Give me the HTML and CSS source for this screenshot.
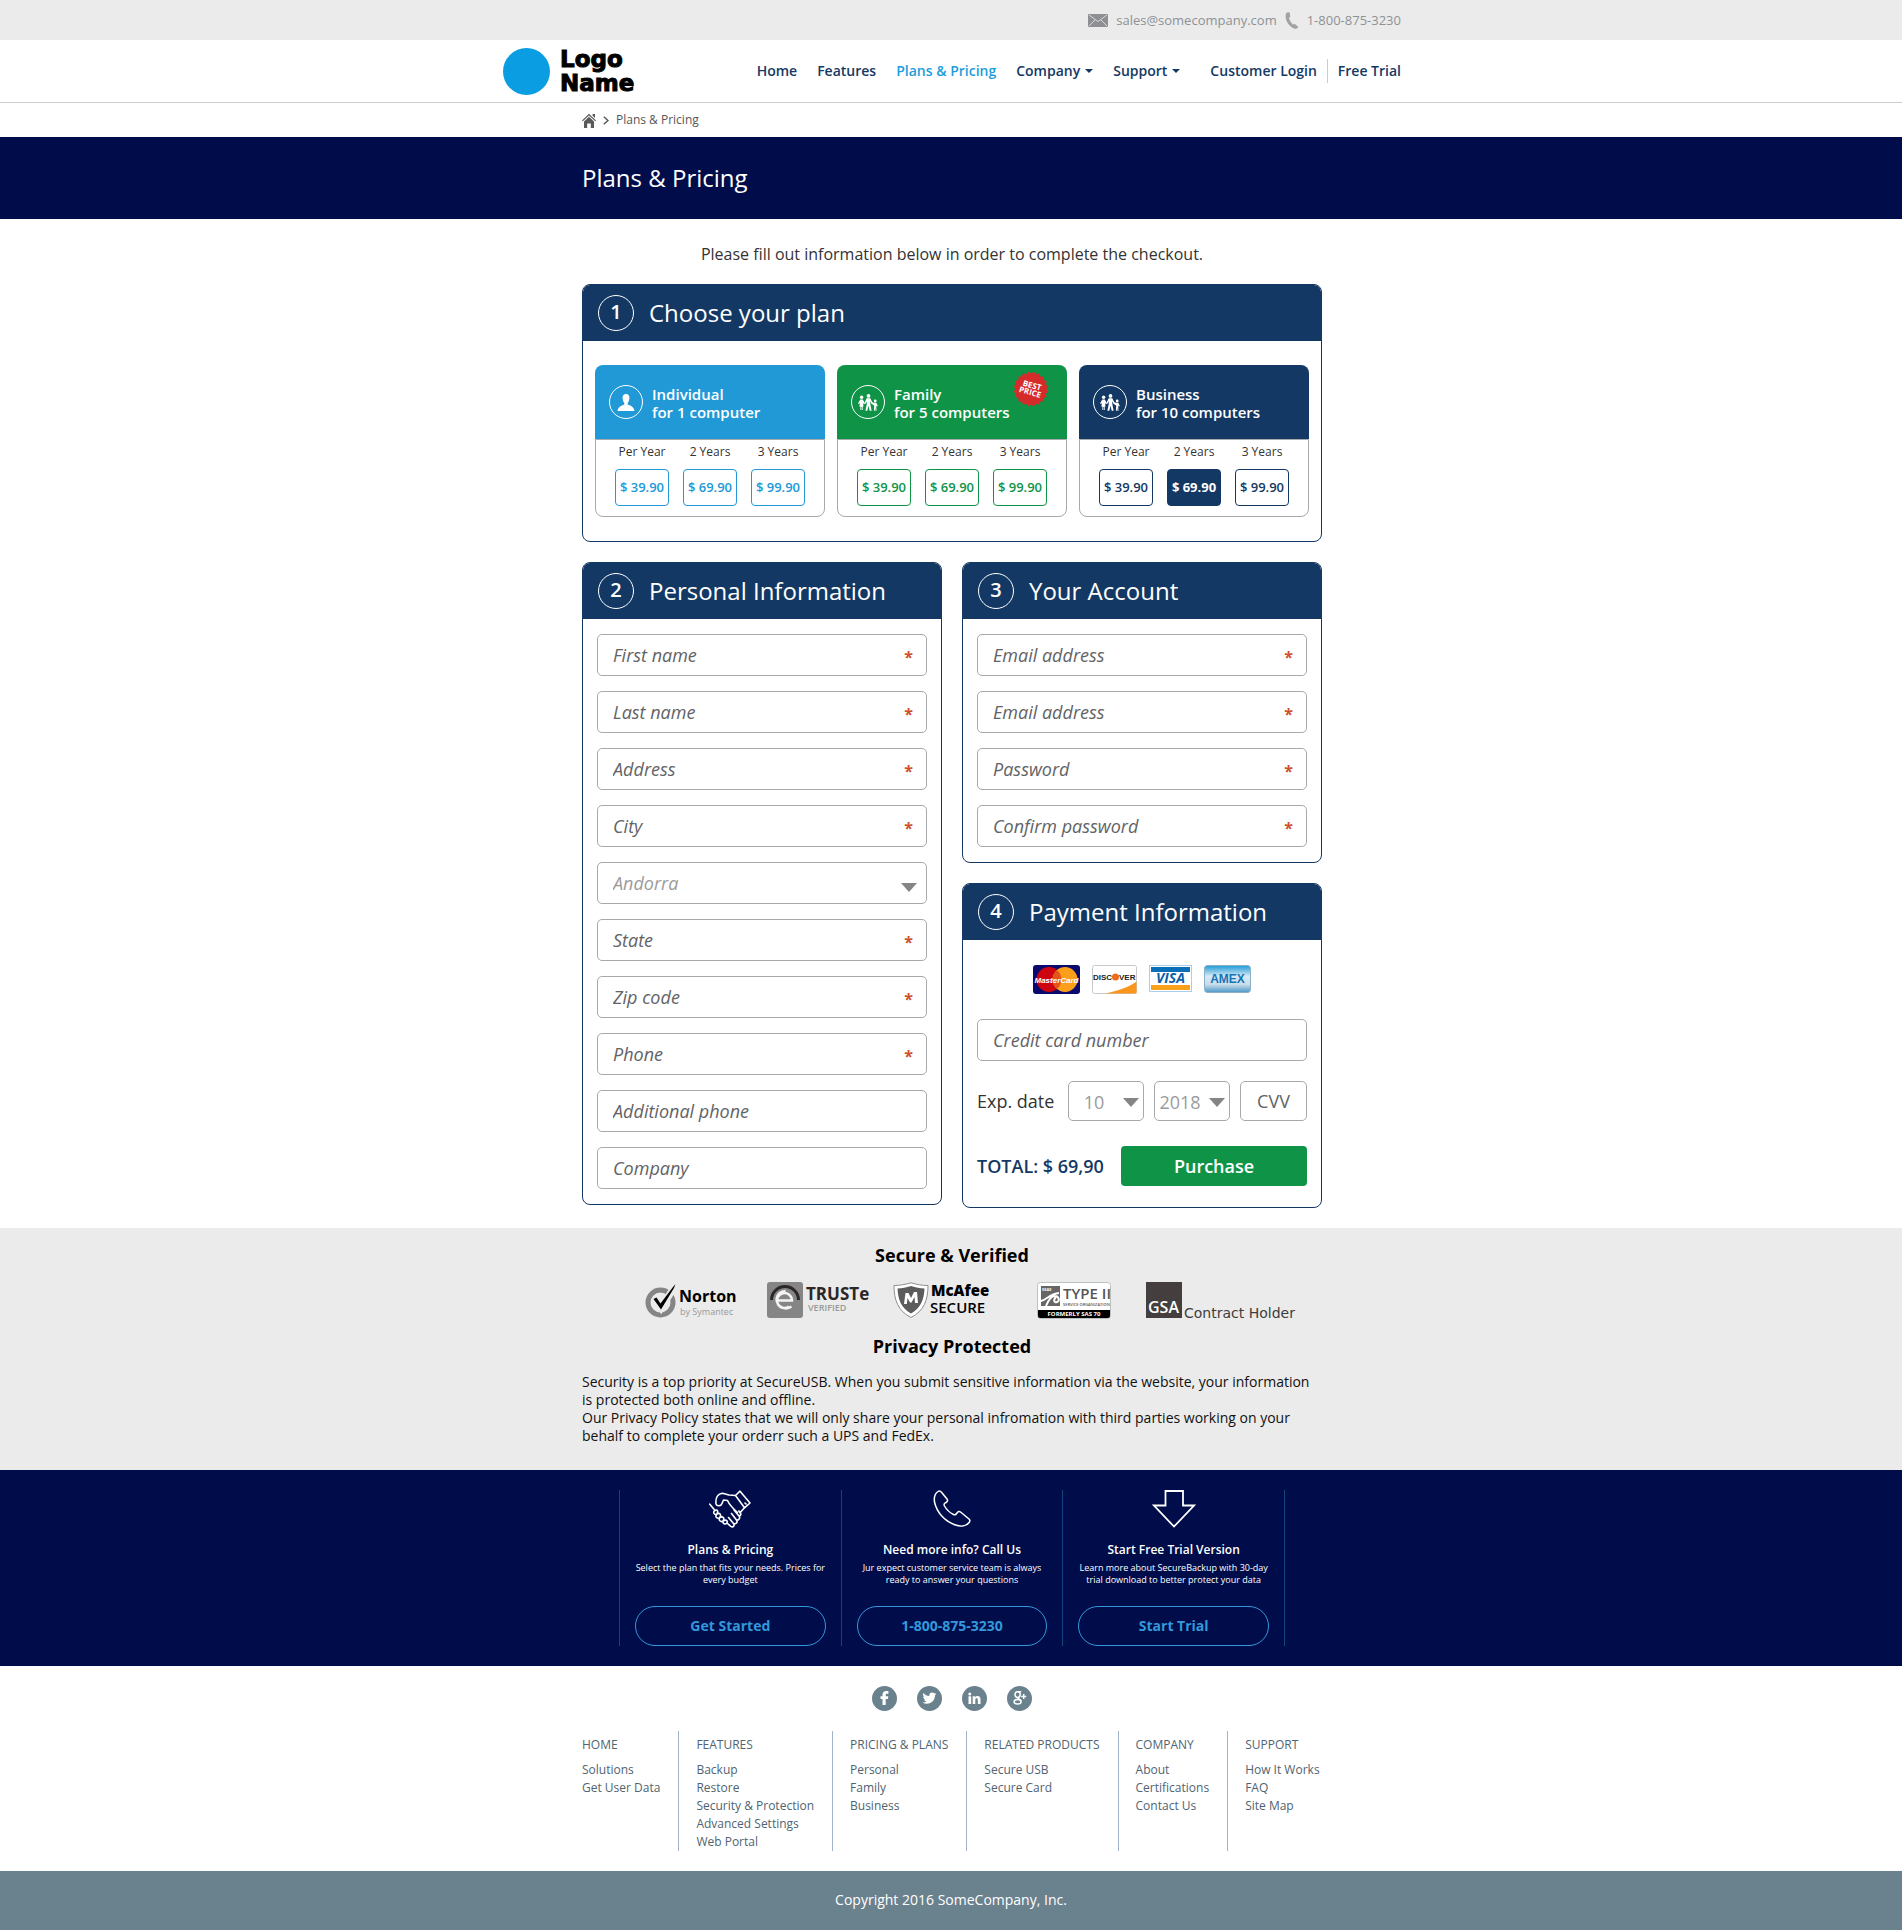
FILE: index.html
```html
<!DOCTYPE html>
<html lang="en">
<head>
<meta charset="utf-8">
<meta name="viewport" content="width=device-width, initial-scale=1">
<title>Plans &amp; Pricing</title>
<link rel="stylesheet" href="styles.css">
</head>
<body>
<svg class="sprite" aria-hidden="true" width="0" height="0">
  <symbol id="group" viewBox="0 0 20 17">
    <circle cx="3.6" cy="3.3" r="1.7"/>
    <path d="M2.3 5.4h2.6l2 4.1-.9.7-1-1.3.5 3.7h-.8V16H3.9v-3h-.6v3H2.4v-3.400H1.200l1-3.800-1 1.300L0 9.500z"/>
    <circle cx="10.500" cy="1.900" r="1.900"/>
    <path d="M8.700 4.200h3.600l2.500 5-1 .7-1.700-2.600.3 3.200 1.200 6.200h-1.900l-1.200-5-1.200 5H7.400l1.300-6.200.2-3.200-1.600 2.600-1-.7z"/>
    <circle cx="17.200" cy="7" r="1.400"/>
    <path d="M16.100 8.800h2.200l1.500 3.200-.8.500-.8-1.100.3 5.300h-1l-.3-3-.3 3h-1l.3-5.300-1.400-.6-1.600-1.900.7-.7z"/>
  </symbol>
</svg>

<div class="topbar">
  <div class="wrap wide topbar-row">
    <svg width="20" height="13" viewBox="0 0 20 13" aria-hidden="true"><rect width="20" height="13" rx="1" fill="#8d8f92"/><path d="M1 1l9 6.500L19 1M1 12l6-6M19 12l-6-6" fill="none" stroke="#d8d8d8"/></svg>
    <a class="mail" href="mailto:sales@somecompany.com">sales@somecompany.com</a>
    <svg width="14" height="17" viewBox="0 0 14 17" aria-hidden="true"><path d="M1 1.500C2 .2 4 0 4.600.8L5.300 4.500 4 6c.5 2.500 2 4.800 4 6.500l2-.6L13.300 15c-.6 1.500-2.600 2.200-4.300 1.600C4 14.500-.8 8 1 1.500z" fill="#a0a2a4"/></svg>
    <a class="phone" href="tel:18008753230">1-800-875-3230</a>
  </div>
</div>

<header class="header">
  <div class="wrap wide header-row">
    <a class="logo" href="#"><span class="logo-dot"></span><span>Logo<br>Name</span></a>
    <nav class="nav">
      <a href="#">Home</a>
      <a href="#">Features</a>
      <a class="active" href="#">Plans &amp; Pricing</a>
      <a class="more" href="#">Company</a>
      <a class="more" href="#">Support</a>
      <span class="account"><a href="#">Customer Login</a><a href="#">Free Trial</a></span>
    </nav>
  </div>
</header>

<div class="wrap crumbs">
  <a href="#" aria-label="Home page"><svg width="14" height="15" viewBox="0 0 14 15" aria-hidden="true"><path d="M0 7.400L7 .8l7 6.600-.8.800L7 2.400.8 8.200z M10.600 1H13v4l-2.400-2.200z M7 3.800l5 4.700V15H8.800v-4.500H5.200V15H2V8.500z" fill="#5a5a5a"/></svg></a>
  <svg width="6" height="9" viewBox="0 0 6 9" aria-hidden="true"><path d="M.8.800L5 4.500.8 8.200" fill="none" stroke="#555" stroke-width="1.500"/></svg>
  <span>Plans &amp; Pricing</span>
</div>

<div class="banner"><div class="wrap"><h1>Plans &amp; Pricing</h1></div></div>

<main class="wrap">
  <p class="intro">Please fill out information below in order to complete the checkout.</p>

  <section class="panel">
    <h2 class="panel-head"><span class="step">1</span>Choose your plan</h2>
    <div class="plans">
      <article class="plan individual">
        <div class="plan-head">
          <span class="plan-icon"><svg width="18" height="17" viewBox="0 0 18 17" aria-hidden="true"><path d="M9 0c2.500 0 3.700 1.800 3.400 4.400C12.200 6.500 11.400 8 10.700 8.900v1.500C13 11.500 17 12.300 17.500 17H.5C1 12.300 5 11.500 7.300 10.400V8.900C6.600 8 5.800 6.500 5.600 4.400 5.300 1.800 6.500 0 9 0z"/></svg></span>
          <h3>Individual<br>for 1 computer</h3>
        </div>
        <div class="prices">
          <div>Per Year<button type="button">$ 39.90</button></div>
          <div>2 Years<button type="button">$ 69.90</button></div>
          <div>3 Years<button type="button">$ 99.90</button></div>
        </div>
      </article>
      <article class="plan family">
        <div class="plan-head">
          <span class="plan-icon"><svg width="20" height="17" aria-hidden="true"><use href="#group"/></svg></span>
          <h3>Family<br>for 5 computers</h3>
          <svg class="badge" width="36" height="36" viewBox="-18 -18 36 36">
            <g fill="#d52b2b"><rect x="-12.500" y="-12.500" width="25" height="25"/><rect x="-12.500" y="-12.500" width="25" height="25" transform="rotate(18)"/><rect x="-12.500" y="-12.500" width="25" height="25" transform="rotate(36)"/><rect x="-12.500" y="-12.500" width="25" height="25" transform="rotate(54)"/><rect x="-12.500" y="-12.500" width="25" height="25" transform="rotate(72)"/></g>
            <g class="badge-text" transform="rotate(16)"><text x="0" y="-1">BEST</text><text x="0" y="6">PRICE</text></g>
          </svg>
        </div>
        <div class="prices">
          <div>Per Year<button type="button">$ 39.90</button></div>
          <div>2 Years<button type="button">$ 69.90</button></div>
          <div>3 Years<button type="button">$ 99.90</button></div>
        </div>
      </article>
      <article class="plan business">
        <div class="plan-head">
          <span class="plan-icon"><svg width="20" height="17" aria-hidden="true"><use href="#group"/></svg></span>
          <h3>Business<br>for 10 computers</h3>
        </div>
        <div class="prices">
          <div>Per Year<button type="button">$ 39.90</button></div>
          <div>2 Years<button type="button" class="chosen" aria-pressed="true">$ 69.90</button></div>
          <div>3 Years<button type="button">$ 99.90</button></div>
        </div>
      </article>
    </div>
  </section>

  <form class="columns">
    <section class="panel">
      <h2 class="panel-head"><span class="step">2</span>Personal Information</h2>
      <div class="fields">
        <div class="field required"><input type="text" placeholder="First name" aria-label="First name"></div>
        <div class="field required"><input type="text" placeholder="Last name" aria-label="Last name"></div>
        <div class="field required"><input type="text" placeholder="Address" aria-label="Address"></div>
        <div class="field required"><input type="text" placeholder="City" aria-label="City"></div>
        <div class="field pick country"><select aria-label="Country"><option>Andorra</option></select></div>
        <div class="field required"><input type="text" placeholder="State" aria-label="State"></div>
        <div class="field required"><input type="text" placeholder="Zip code" aria-label="Zip code"></div>
        <div class="field required"><input type="tel" placeholder="Phone" aria-label="Phone"></div>
        <div class="field"><input type="tel" placeholder="Additional phone" aria-label="Additional phone"></div>
        <div class="field"><input type="text" placeholder="Company" aria-label="Company"></div>
      </div>
    </section>

    <div class="stack">
      <section class="panel">
        <h2 class="panel-head"><span class="step">3</span>Your Account</h2>
        <div class="fields">
          <div class="field required"><input type="email" placeholder="Email address" aria-label="Email address"></div>
          <div class="field required"><input type="email" placeholder="Email address" aria-label="Repeat email address"></div>
          <div class="field required"><input type="password" placeholder="Password" aria-label="Password"></div>
          <div class="field required"><input type="password" placeholder="Confirm password" aria-label="Confirm password"></div>
        </div>
      </section>

      <section class="panel">
        <h2 class="panel-head"><span class="step">4</span>Payment Information</h2>
        <div class="payment">
          <div class="cards">
            <svg width="47" height="29" viewBox="0 0 47 29"><rect width="47" height="29" rx="3" fill="#0a0a6e"/><circle cx="16" cy="14.500" r="12.500" fill="#cc0510"/><circle cx="32" cy="14.500" r="12.500" fill="#fb9f1b"/><path d="M24 5a12.500 12.500 0 0 1 0 19a12.500 12.500 0 0 1 0-19z" fill="#e2531a"/><text class="mc" x="23.500" y="18">MasterCard</text></svg>
            <svg width="45" height="29" viewBox="0 0 45 29"><rect x=".5" y=".5" width="44" height="28" rx="2" fill="#fff" stroke="#c9c9c9"/><path d="M12 28.500C25 26.500 37 22 44.500 16.500v12z" fill="#f9961e"/><circle cx="23.500" cy="12" r="3.500" fill="#ef6c1a"/><g class="disc"><text x="1" y="15">DISC</text><text x="27" y="15">VER</text></g></svg>
            <svg width="43" height="27" viewBox="0 0 43 27"><rect x=".5" y=".5" width="42" height="26" fill="#fff" stroke="#a9cdea"/><rect x="2" y="2" width="39" height="5" fill="#0a6fb8"/><rect x="2" y="20" width="39" height="5" fill="#f9a11b"/><text class="visa" x="21.500" y="18">VISA</text></svg>
            <svg width="47" height="28" viewBox="0 0 47 28"><defs><linearGradient id="amex" x1="0" y1="0" x2="0" y2="1"><stop offset="0" stop-color="#1f9ad6"/><stop offset=".4" stop-color="#d7e9f5"/><stop offset=".7" stop-color="#c9dcea"/><stop offset="1" stop-color="#4b97c9"/></linearGradient></defs><rect x=".5" y=".5" width="46" height="27" rx="3" fill="url(#amex)" stroke="#8bb0c8"/><text class="amex" x="23.500" y="18">AMEX</text></svg>
          </div>
          <div class="field"><input type="text" placeholder="Credit card number" aria-label="Credit card number"></div>
          <div class="expiry">
            <label for="exp-month">Exp. date</label>
            <div class="pick small"><select id="exp-month"><option>10</option></select></div>
            <div class="pick small"><select aria-label="Expiry year"><option>2018</option></select></div>
            <input class="cvv" type="text" placeholder="CVV" aria-label="CVV">
          </div>
          <div class="total">
            <strong>TOTAL: $ 69,90</strong>
            <button class="buy" type="submit">Purchase</button>
          </div>
        </div>
      </section>
    </div>
  </form>
</main>

<section class="secure">
  <div class="wrap">
    <h2>Secure &amp; Verified</h2>
    <div class="seals">
      <svg width="122" height="37" viewBox="0 0 122 37"><circle cx="15.500" cy="20.500" r="12.500" fill="none" stroke="#858585" stroke-width="5"/><path d="M10 18l6 8L30 4" fill="none" stroke="#ebebeb" stroke-width="7"/><path d="M8.500 17l3-1.500 4 6L28 5l2.500-3-1.500 4-13 21.500z"/><text class="norton" x="34" y="20">Norton</text><text class="by" x="35" y="33">by Symantec</text></svg>
      <svg width="126" height="37" viewBox="0 0 126 37"><rect width="36" height="36" rx="3" fill="#858585"/><path d="M4.500 18a13.500 13.500 0 0 1 27 0" fill="none" stroke="#2d2626" stroke-width="3"/><path d="M11 18.500h14a7.500 7.500 0 1 0-3 6M24.500 24.500a9.500 9.500 0 0 1-15-7.500 9 9 0 0 1 9-8" fill="none" stroke="#f3f3f3" stroke-width="2.500"/><text class="truste" x="39" y="18">TRUSTe</text><text class="verified" x="41" y="29">VERIFIED</text></svg>
      <svg width="144" height="37" viewBox="0 0 144 37"><path d="M1 3.500C7 3.500 12 2.500 18 .8c6 1.700 11 2.700 17 2.700C35 18 31 29 18 35.500 5 29 1 18 1 3.500z" fill="#fff" stroke="#8e8e8e"/><path d="M4.500 6.500C9.500 6.500 13 5.500 18 4c5 1.500 8.500 2.500 13.500 2.500C31 17.500 28 26 18 31.500 8 26 5 17.500 4.500 6.500z" fill="#5c5c5c"/><path d="M11 22l1.500-11h3L18 16l3-6h3L25 21h-3l-.5-6-3 5.500h-1.500L14.500 16l-.7 6z" fill="#fff"/><g class="mcafee"><text x="38" y="14">McAfee</text><text class="thin" x="37" y="31">SECURE</text></g></svg>
      <svg width="109" height="37" viewBox="0 0 109 37"><rect x=".5" y=".5" width="73" height="36" rx="3" fill="#fff" stroke="#b9c2c0"/><path d="M1 28h72v6a2 2 0 0 1-2 2H3a2 2 0 0 1-2-2z"/><rect x="4" y="4" width="19" height="20" fill="#666"/><path d="M4 19c5-1 9-7 18-8M9 24c2-5 5-10 9-10s5 5 2 6-4-2-1-5" fill="none" stroke="#fff" stroke-width="2"/><text class="ssae" x="5" y="9">SSAE</text><text class="type" x="26" y="17">TYPE II</text><text class="org" x="26" y="24">SERVICE ORGANIZATION</text><text class="sas" x="37" y="34">FORMERLY SAS 70</text></svg>
      <svg width="154" height="40" viewBox="0 0 154 40"><rect width="36" height="36" fill="#443f3e"/><text class="gsa" x="2" y="31">GSA</text><text class="holder" x="38" y="36">Contract Holder</text></svg>
    </div>
    <h2>Privacy Protected</h2>
    <p>Security is a top priority at SecureUSB. When you submit sensitive information via the website, your information is protected both online and offline.<br>Our Privacy Policy states that we will only share your personal infromation with third parties working on your behalf to complete your orderr such a UPS and FedEx.</p>
  </div>
</section>

<section class="promo">
  <div class="promo-row">
    <div class="promo-item">
      <svg width="42" height="38" viewBox="0 0 42 38" aria-hidden="true"><path d="M31 1.200L26.500 5.500 35.500 17.800 41 13zM26.500 5.500L20 5 13.500 3.200C8 3.800 6.500 9 7 14c1 2.500 5 2.500 6-.5l1.500-3.500 4 .5c2 4.500 5.500 8 10 12M35.500 17.800l-4.500 5M.8 14.200L6 20.500M36 13l1 1M6 20.500c-2.500 1.500-1 4.500 1.500 4-1.500 2.500.5 4.500 3 3.500-1 2.500 1.500 4.500 3.500 3-.5 2.500 2 4 4 2l3.500 3.200c2.500 1.800 4.500-.4 3-2.700 2.500 1 4.500-1 3-3.500 2.500.5 4-2 2.500-4 2.500-.500 2.500-3-.200-5M6 20.500c2-1.500 4 .5 1.500 4M7.500 24.500c3-2.500 5.500 0 3 3.500M10.500 28c3-2.500 5.500 0 3.500 3M14 31c3-2 5 0 4 2M24.500 33.500l-5-6M27.500 30l-5-6.500M30 26l-5-6" fill="none" stroke="#fff" stroke-width="1.600" stroke-linejoin="round" stroke-linecap="round"/></svg>
      <h3>Plans &amp; Pricing</h3>
      <p>Select the plan that fits your needs. Prices for every budget</p>
      <a class="pill" href="#">Get Started</a>
    </div>
    <div class="promo-item">
      <svg width="38" height="38" viewBox="0 0 38 38" aria-hidden="true"><path d="M5 1.500C6 .7 7.500 1 8.500 2.200L14 9c1 1.500.6 2.500-1 3.500-2 1-2.300 2-1.500 3.500 2 3.500 5 6.500 9 8.500 1.500.8 2.500.2 3.500-1.500s2.200-2 3.500-1l8.500 7c1 1 1.200 2 .3 3.200C33.500 36 28 37 22.500 35 12 31.500 4 23 1.500 12 .8 7 2 3.500 5 1.500z" fill="none" stroke="#fff" stroke-width="1.500"/></svg>
      <h3>Need more info? Call Us</h3>
      <p>Jur expect customer service team is always ready to answer your questions</p>
      <a class="pill" href="#">1-800-875-3230</a>
    </div>
    <div class="promo-item">
      <svg width="44" height="38" viewBox="0 0 44 38" aria-hidden="true"><path d="M13.500 1H31v14.500h11L22 36.500 2 15.500h11.500z" fill="none" stroke="#fff" stroke-width="1.800"/></svg>
      <h3>Start Free Trial Version</h3>
      <p>Learn more about SecureBackup with 30-day trial download to better protect your data</p>
      <a class="pill" href="#">Start Trial</a>
    </div>
  </div>
</section>

<footer>
  <div class="wrap">
    <div class="social">
      <a href="#" aria-label="Facebook"><svg width="25" height="25" viewBox="0 0 25 25"><circle cx="12.500" cy="12.500" r="12.500"/><path fill="#fff" d="M10.500 19v-6H8.500v-2.700h2V8.500C10.500 6.300 12 5 14 5h2.400v2.700h-1.600c-.8 0-1.100.4-1.100 1.100v1.500h2.600L16 13h-2.300v6z"/></svg></a>
      <a href="#" aria-label="Twitter"><svg width="25" height="25" viewBox="0 0 25 25"><circle cx="12.500" cy="12.500" r="12.500"/><path fill="#fff" transform="translate(5.500 5.200) scale(.58)" d="M23.900 4.600c-.9.400-1.800.7-2.800.8 1-.6 1.800-1.600 2.200-2.700-1 .6-2 1-3.100 1.200a4.900 4.900 0 0 0-8.400 4.500C7.700 8.200 4.100 6.300 1.700 3.200a4.800 4.800 0 0 0 1.500 6.500c-.8 0-1.600-.2-2.200-.6v.1c0 2.300 1.700 4.300 3.900 4.800-.7.200-1.500.2-2.200.1.600 1.900 2.400 3.300 4.600 3.400A9.900 9.900 0 0 1 0 19.500 14 14 0 0 0 7.500 21.700c9.100 0 14.400-7.700 14-14.600 1-.7 1.800-1.600 2.400-2.500z"/></svg></a>
      <a href="#" aria-label="LinkedIn"><svg width="25" height="25" viewBox="0 0 25 25"><circle cx="12.500" cy="12.500" r="12.500"/><path fill="#fff" d="M6.500 10.200h2.700V18H6.500zM7.800 6.500a1.500 1.500 0 1 1 0 3 1.500 1.500 0 0 1 0-3zM10.700 10.200h2.500v1.100c.6-.9 1.400-1.400 2.500-1.400 2.100 0 2.800 1.400 2.800 3.500V18h-2.700v-4.200c0-1-.4-1.600-1.200-1.600-.8 0-1.300.6-1.300 1.600V18h-2.600z"/></svg></a>
      <a href="#" aria-label="Google Plus"><svg width="25" height="25" viewBox="0 0 25 25"><circle cx="12.500" cy="12.500" r="12.500"/><g fill="none" stroke="#fff" stroke-width="1.500"><ellipse cx="10.600" cy="8.600" rx="2.600" ry="2.900"/><ellipse cx="10.600" cy="15.800" rx="3.500" ry="2.300"/><path d="M11 5.700h3.200M10.500 11.500c-.5 1 3.300 1.500 3.500 3.500M14.200 10.500h5M16.700 8v5"/></g></svg></a>
    </div>
    <nav class="sitemap">
      <div><h4>HOME</h4><a href="#">Solutions</a><a href="#">Get User Data</a></div>
      <div><h4>FEATURES</h4><a href="#">Backup</a><a href="#">Restore</a><a href="#">Security &amp; Protection</a><a href="#">Advanced Settings</a><a href="#">Web Portal</a></div>
      <div><h4>PRICING &amp; PLANS</h4><a href="#">Personal</a><a href="#">Family</a><a href="#">Business</a></div>
      <div><h4>RELATED PRODUCTS</h4><a href="#">Secure USB</a><a href="#">Secure Card</a></div>
      <div><h4>COMPANY</h4><a href="#">About</a><a href="#">Certifications</a><a href="#">Contact Us</a></div>
      <div><h4>SUPPORT</h4><a href="#">How It Works</a><a href="#">FAQ</a><a href="#">Site Map</a></div>
    </nav>
  </div>
  <p class="copyright">Copyright 2016 SomeCompany, Inc.</p>
</footer>
</body>
</html>
```
FILE: styles.css
```css
:root {
  --navy: #143864;
  --deep: #000d4a;
  --blue: #2199d7;
  --green: #0f9447;
  --grey: #ebebeb;
  --line: #a7a9ac;
  --slate: #6a818e;
}

*, *::before, *::after { box-sizing: border-box; }

body {
  margin: 0;
  font: 400 14px/18px "Open Sans", "Noto Sans", sans-serif;
  color: #333;
  background: #fff;
}

h1, h2, h3, h4, p { margin: 0; font-weight: 400; }
a { color: inherit; text-decoration: none; }
svg { display: block; flex: none; }
button, input, select { font: inherit; margin: 0; }
.sprite { position: absolute; }

.wrap { max-width: 742px; margin: 0 auto; padding-left: 2px; }
.wide { max-width: 900px; }

/* Top contact strip */
.topbar { background: var(--grey); }
.topbar-row {
  display: flex;
  align-items: center;
  justify-content: flex-end;
  height: 40px;
  gap: 8px;
  font-size: 13px;
  color: #8d9296;
}

/* Header */
.header { border-bottom: 1px solid #ccc; }
.header-row {
  display: flex;
  align-items: center;
  justify-content: space-between;
  height: 62px;
}
.logo {
  display: flex;
  align-items: center;
  gap: 10px;
  font: 700 23px/24px "DejaVu Sans", sans-serif;
  color: #000;
  -webkit-text-stroke: 1px #000;
}
.logo-dot { width: 47px; height: 47px; border-radius: 50%; background: #0b9de2; }
.nav { display: flex; align-items: center; gap: 20px; font-weight: 600; color: var(--navy); }
.nav .active { color: #1b9ddb; }
.more { display: flex; align-items: center; gap: 5px; }
.more::after { content: ""; border: 4px solid transparent; border-top-color: var(--navy); border-bottom: 0; }
.account { display: flex; align-items: center; margin-left: 10px; line-height: 24px; }
.account a + a { margin-left: 10px; padding-left: 10px; border-left: 1px solid #ccc; }

.crumbs { display: flex; align-items: center; height: 34px; gap: 7px; font-size: 12px; color: #555; }

.banner { padding: 25px 0; background: var(--deep); color: #fff; }
.banner h1 { font-size: 24px; line-height: 32px; }

.intro { padding: 25px 0 20px; font-size: 16px; line-height: 20px; text-align: center; }

/* Panels */
.panel { border: 1px solid var(--navy); border-radius: 8px; overflow: hidden; }
.panel-head {
  display: flex;
  align-items: center;
  gap: 15px;
  height: 56px;
  padding: 0 15px;
  background: var(--navy);
  color: #fff;
  font-size: 24px;
}
.step {
  flex: none;
  width: 36px;
  height: 36px;
  border: 1px solid #fff;
  border-radius: 50%;
  font-size: 20px;
  line-height: 32px;
  font-weight: 600;
  text-align: center;
}

/* Plans */
.plans { display: grid; grid-template-columns: repeat(3, 1fr); gap: 12px; padding: 24px 12px; }
.plan { --tone: var(--navy); border-radius: 8px; color: var(--tone); }
.individual { --tone: var(--blue); }
.family { --tone: var(--green); }
.plan-head {
  position: relative;
  display: flex;
  align-items: center;
  gap: 9px;
  height: 74px;
  padding: 0 14px;
  border-radius: 8px 8px 0 0;
  background: var(--tone);
  color: #fff;
}
.plan-head h3 { padding-top: 2px; font-size: 15px; line-height: 18px; font-weight: 600; }
.plan-icon {
  display: grid;
  place-items: center;
  width: 34px;
  height: 34px;
  border: 1px solid #fff;
  border-radius: 50%;
  fill: #fff;
}
.badge { position: absolute; top: 6px; right: 18px; }
.badge-text { font-size: 8px; font-weight: 700; fill: #fff; text-anchor: middle; }
.prices {
  display: flex;
  justify-content: center;
  gap: 14px;
  padding: 3px 0 10px;
  border: 1px solid var(--line);
  border-radius: 0 0 8px 8px;
  font-size: 12px;
  text-align: center;
}
.prices > div { width: 54px; color: #333; white-space: nowrap; }
.prices button {
  display: block;
  width: 54px;
  height: 37px;
  margin-top: 8px;
  padding: 0 0 1px;
  border: 1px solid var(--tone);
  border-radius: 4px;
  background: #fff;
  color: var(--tone);
  font-size: 13px;
  font-weight: 600;
}
.prices .chosen { background: var(--tone); color: #fff; font-weight: 700; }

/* Forms */
.columns { display: grid; grid-template-columns: 1fr 1fr; align-items: start; gap: 20px; padding: 20px 0; }
.stack { display: grid; gap: 20px; }
.fields { display: grid; gap: 15px; padding: 15px 14px; }
.field, .pick { position: relative; }
.field input, select, .cvv {
  display: block;
  width: 100%;
  height: 42px;
  padding: 0 15px 1px;
  border: 1px solid var(--line);
  border-radius: 5px;
  background: #fff;
  font-size: 18px;
  font-style: italic;
  color: #626366;
}
::placeholder { color: #626366; opacity: 1; }
.required::after {
  content: "*";
  position: absolute;
  right: 14px;
  top: 13px;
  font-size: 16px;
  line-height: 20px;
  font-weight: 700;
  color: #d0502c;
}
select { appearance: none; }
.pick select { color: #9b9b9b; }
.pick::after {
  content: "";
  position: absolute;
  right: 10px;
  top: 21px;
  border: 8px solid transparent;
  border-top: 9px solid #858585;
  border-bottom: 0;
  pointer-events: none;
}

.payment { display: grid; padding: 25px 14px 21px; }
.cards { display: flex; justify-content: center; gap: 12px; margin-bottom: 25px; }
.expiry { display: flex; align-items: center; gap: 10px; margin: 20px 0 25px; }
.expiry label { flex: 1; font-size: 18px; white-space: nowrap; }
.small { width: 76px; }
.small select { height: 40px; padding: 2px 24px 0 0; text-align: center; font-style: normal; }
.small::after { right: 5px; top: 17px; }
.cvv { width: 67px; height: 40px; padding: 0; text-align: center; font-style: normal; }
.total { display: flex; align-items: center; justify-content: space-between; color: var(--navy); }
.total strong { font-size: 18px; font-weight: 600; }
.buy { width: 186px; height: 40px; border: 0; border-radius: 4px; background: var(--green); color: #fff; font-size: 18px; font-weight: 600; }

.mc { font: italic 700 8px "Liberation Sans", sans-serif; fill: #fff; text-anchor: middle; }
.disc { font: 700 8px "Liberation Sans", sans-serif; fill: #222; }
.visa { font: italic 700 14px "Open Sans", sans-serif; fill: #0a5ea8; text-anchor: middle; }
.amex { font: 700 12px "Liberation Sans", sans-serif; fill: #1673b5; text-anchor: middle; }

/* Trust seals */
.secure { padding: 15px 0 25px; background: var(--grey); color: #111; }
.secure h2 { font-size: 18px; line-height: 24px; font-weight: 700; text-align: center; color: #000; }
.seals { display: flex; height: 37px; margin: 15px 0 15px 63px; }
.seals svg { overflow: visible; }
.secure p { margin-top: 15px; }
.norton { font: 700 16px "Open Sans", sans-serif; }
.by { font: 9px "Open Sans", sans-serif; fill: #999; }
.truste { font: 700 17px "Open Sans", sans-serif; fill: #2d2626; }
.verified { font: 600 9px "Open Sans", sans-serif; fill: #999; }
.mcafee { font: 800 15px "Open Sans", sans-serif; }
.thin { font-weight: 600; }
.ssae { font: 700 4px "Open Sans", sans-serif; fill: #fff; }
.type { font: 600 15px "Open Sans", sans-serif; fill: #555; }
.org { font: 600 4px "Open Sans", sans-serif; fill: #555; }
.sas { font: 700 6px "Open Sans", sans-serif; fill: #fff; text-anchor: middle; }
.gsa { font: 600 16px "Open Sans", sans-serif; fill: #fff; }
.holder { font: 14px "DejaVu Sans", sans-serif; fill: #3d3d3d; }

/* Promo band */
.promo { padding: 20px 20px 20px 22px; background: var(--deep); color: #fff; }
.promo-row { display: flex; max-width: 666px; margin: 0 auto; border-left: 1px solid #12437f; }
.promo-item {
  flex: 1;
  display: flex;
  flex-direction: column;
  align-items: center;
  padding: 0 15px;
  border-right: 1px solid #12437f;
  text-align: center;
}
.promo h3 { margin-top: 13px; font-size: 12px; font-weight: 600; }
.promo p { margin: 3px 0 20px; font-size: 9px; line-height: 12px; }
.pill {
  width: 100%;
  height: 40px;
  border: 1px solid #3498db;
  border-radius: 20px;
  color: #3498db;
  font-weight: 700;
  line-height: 38px;
}

/* Footer */
.social { display: flex; justify-content: center; gap: 20px; padding: 20px 0; fill: var(--slate); }
.sitemap { display: flex; margin-bottom: 20px; font-size: 12px; color: #4f6471; }
.sitemap div { padding: 5px 18px 0 17px; border-right: 1px solid #a3b3c7; }
.sitemap div:first-child { padding-left: 0; }
.sitemap div:last-child { padding-right: 0; border-right: 0; }
.sitemap h4 { margin-bottom: 7px; }
.sitemap a { display: block; }
.copyright { padding: 20px 0 21px; background: var(--slate); color: #fff; text-align: center; }
```
